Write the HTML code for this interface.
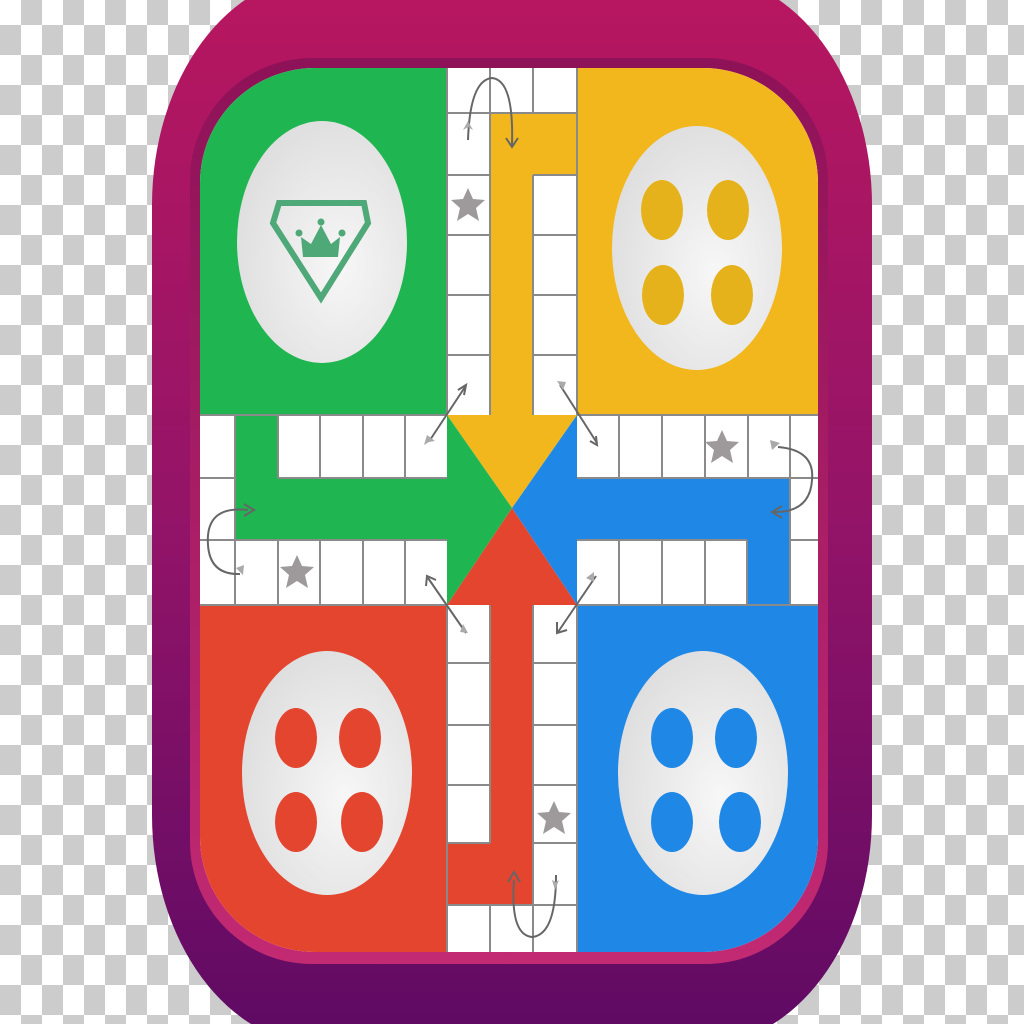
<!DOCTYPE html>
<html><head><style>
html,body{margin:0;padding:0;width:1024px;height:1024px;overflow:hidden;background:#fff}
</style></head><body>
<svg width="1024" height="1024" viewBox="0 0 1024 1024" xmlns="http://www.w3.org/2000/svg">
<defs>
<pattern id="chk" x="0" y="-5" width="42" height="60" patternUnits="userSpaceOnUse">
<rect width="42" height="60" fill="#fff"/>
<rect x="21" y="0" width="21" height="30" fill="#cccccc"/>
<rect x="0" y="30" width="21" height="30" fill="#cccccc"/>
</pattern>
<linearGradient id="fr" x1="0" y1="0" x2="0" y2="1">
<stop offset="0" stop-color="#b8175f"/><stop offset="0.5" stop-color="#941468"/><stop offset="1" stop-color="#5e0a64"/>
</linearGradient>
<linearGradient id="rim" x1="0" y1="0" x2="0" y2="1">
<stop offset="0" stop-color="#8e1258"/><stop offset="1" stop-color="#c22a72"/>
</linearGradient>
<radialGradient id="disc" cx="0.6" cy="0.6" r="0.7">
<stop offset="0" stop-color="#f7f7f7"/><stop offset="1" stop-color="#dcdcdc"/>
</radialGradient>
<clipPath id="bd"><rect x="200" y="68" width="618" height="884" rx="115"/></clipPath>
<g id="star"><polygon points="0,-17 5,-6 17,-5 8,3 11,16 0,9 -11,16 -8,3 -17,-5 -5,-6" fill="#9e9a9c"/></g>
</defs>
<rect width="1024" height="1024" fill="url(#chk)"/>
<rect x="152" y="-25" width="720" height="1070" rx="170" ry="230" fill="url(#fr)"/>
<rect x="190" y="58" width="638" height="906" rx="122" fill="url(#rim)"/>
<g clip-path="url(#bd)">
<rect x="200" y="68" width="618" height="884" fill="#fff"/>
<rect x="200" y="68" width="247" height="347" fill="#1fb550"/>
<rect x="577" y="68" width="241" height="347" fill="#f2b71d"/>
<rect x="200" y="605" width="247" height="347" fill="#e4452f"/>
<rect x="577" y="605" width="241" height="347" fill="#1f88e6"/>
<rect x="447" y="68" width="130" height="347" fill="#fff"/>
<rect x="490" y="113" width="43" height="302" fill="#f2b71d"/>
<rect x="533" y="113" width="44" height="62" fill="#f2b71d"/>
<rect x="447" y="605" width="130" height="347" fill="#fff"/>
<rect x="490" y="605" width="43" height="300" fill="#e4452f"/>
<rect x="447" y="843" width="43" height="62" fill="#e4452f"/>
<rect x="200" y="415" width="247" height="190" fill="#fff"/>
<rect x="235" y="478" width="212" height="62" fill="#1fb550"/>
<rect x="235" y="415" width="43" height="63" fill="#1fb550"/>
<rect x="577" y="415" width="241" height="190" fill="#fff"/>
<rect x="577" y="478" width="213" height="62" fill="#1f88e6"/>
<rect x="747" y="540" width="43" height="65" fill="#1f88e6"/>
<g stroke="#8a8a8a" stroke-width="2" fill="none">
<path d="M447 68V415M490 68V113M533 68V113M577 68V415M447 113H577M447 175H490M447 235H490M447 295H490M447 355H490M533 175V415M533 175H577M533 235H577M533 295H577M533 355H577M490 113V415"/>
<path d="M447 605V952M577 605V952M490 605V843M533 605V952M447 663H490M447 725H490M447 785H490M447 843H490M533 663H577M533 725H577M533 785H577M533 843H577M447 905H577M490 905V952"/>
<path d="M200 415H447M200 605H447M200 478H235M200 540H235M235 415V605M278 415V478M278 540V605M320 415V478M363 415V478M405 415V478M278 478H447M320 540V605M363 540V605M405 540V605M235 540H447"/>
<path d="M577 415H818M577 605H818M577 478H790M577 540H747M790 415V605M790 478H818M790 540H818M619 415V478M662 415V478M705 415V478M748 415V478M619 540V605M662 540V605M705 540V605M747 540V605"/>
</g>
<polygon points="447,415 577,415 512,508" fill="#f2b71d"/>
<polygon points="447,415 447,605 512,508" fill="#1fb550"/>
<polygon points="577,415 577,605 512,508" fill="#1f88e6"/>
<polygon points="447,605 577,605 512,508" fill="#e4452f"/>
</g>
<ellipse cx="322" cy="242" rx="85" ry="121" fill="url(#disc)"/>
<ellipse cx="697" cy="248" rx="85" ry="122" fill="url(#disc)"/>
<ellipse cx="327" cy="773" rx="85" ry="122" fill="url(#disc)"/>
<ellipse cx="703" cy="773" rx="85" ry="122" fill="url(#disc)"/>
<g fill="#e6b21c"><ellipse cx="662" cy="210" rx="21" ry="30"/><ellipse cx="728" cy="210" rx="21" ry="30"/><ellipse cx="663" cy="295" rx="21" ry="30"/><ellipse cx="732" cy="295" rx="21" ry="30"/></g>
<g fill="#e4452f"><ellipse cx="296" cy="738" rx="21" ry="30"/><ellipse cx="360" cy="738" rx="21" ry="30"/><ellipse cx="296" cy="822" rx="21" ry="30"/><ellipse cx="362" cy="822" rx="21" ry="30"/></g>
<g fill="#1f88e6"><ellipse cx="672" cy="738" rx="21" ry="30"/><ellipse cx="736" cy="738" rx="21" ry="30"/><ellipse cx="672" cy="822" rx="21" ry="30"/><ellipse cx="740" cy="822" rx="21" ry="30"/></g>
<polygon points="273,223 279,203 364,203 368,223 321,298" fill="none" stroke="#4ea878" stroke-width="6" stroke-linejoin="miter"/>
<polygon points="303,257 338,257 340,237 331,244 321,225 311,244 301,237" fill="#4ea878"/>
<circle cx="321" cy="222" r="3.5" fill="#4ea878"/><circle cx="299" cy="233" r="3.5" fill="#4ea878"/><circle cx="342" cy="233" r="3.5" fill="#4ea878"/>
<use href="#star" x="468" y="205"/>
<use href="#star" x="722" y="447"/>
<use href="#star" x="297" y="572"/>
<use href="#star" x="554" y="818"/>
<g fill="none" stroke="#666" stroke-width="2">
<path d="M468 140 Q470 80 492 78 Q514 80 512 145"/>
<path d="M506 138 L512 147 L518 138"/>
<path d="M248 510 Q205 505 208 545 Q210 575 240 574"/>
<path d="M244 504 L254 510 L244 516"/>
<path d="M778 447 Q815 450 812 480 Q810 512 775 512"/>
<path d="M782 506 L772 512 L782 518"/>
<path d="M514 880 Q510 935 532 937 Q556 935 556 875"/>
<path d="M508 882 L514 872 L520 882"/>
<path d="M430 440 L465 387"/><path d="M458 390 L466 385 L464 395"/>
<path d="M560 385 L597 443"/><path d="M590 441 L597 445 L596 436"/>
<path d="M428 578 L466 633"/><path d="M426 586 L427 576 L436 580"/>
<path d="M596 576 L558 632"/><path d="M557 622 L557 633 L567 630"/>
</g>
<g fill="#aaa"><path d="M463 130 l5 -9 l5 9 l-5 -3z"/><path d="M424 445 l3 -10 l8 6 l-6 1z"/><path d="M770 440 l10 3 l-8 7z"/><path d="M236 568 l8 -3 l-1 10z"/><path d="M552 880 l3 10 l4 -10 l-3 2z"/><path d="M594 572 l0 10 l-8 -4z"/><path d="M557 381 l9 1 l-3 8z"/><path d="M468 633 l-8 -1 l3 -8z"/></g>
</svg>
</body></html>
